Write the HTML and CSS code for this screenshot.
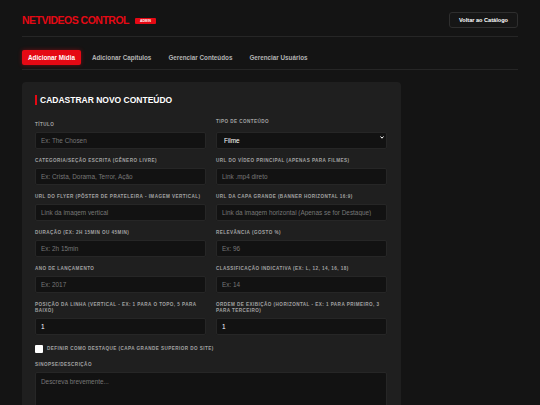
FILE: index.html
```html
<!DOCTYPE html>
<html lang="pt-BR">
<head>
<meta charset="utf-8">
<title>NetVideos Control</title>
<link rel="stylesheet" href="styles.css">
</head>
<body>
<div class="page">
  <header class="topbar">
    <div class="brand">
      <span class="brand-name">NETVIDEOS CONTROL</span>
      <span class="badge">ADMIN</span>
    </div>
    <button class="btn-back">Voltar ao Catálogo</button>
  </header>

  <nav class="tabs">
    <button class="tab active">Adicionar Mídia</button>
    <button class="tab">Adicionar Capítulos</button>
    <button class="tab">Gerenciar Conteúdos</button>
    <button class="tab">Gerenciar Usuários</button>
  </nav>

  <section class="card">
    <h2 class="card-title">CADASTRAR NOVO CONTEÚDO</h2>
    <form class="form-grid">
      <div class="field">
        <label>Título</label>
        <input type="text" placeholder="Ex: The Chosen">
      </div>
      <div class="field">
        <label>Tipo de Conteúdo</label>
        <div class="select-wrap">
          <select><option>Filme</option><option>Série</option></select>
          <svg class="chev" width="4" height="3" viewBox="0 0 4 3"><path d="M0.5 0.5 L2 2.2 L3.5 0.5" fill="none" stroke="#fff" stroke-width="1"/></svg>
        </div>
      </div>
      <div class="field">
        <label>Categoria/Seção Escrita (Gênero Livre)</label>
        <input type="text" placeholder="Ex: Crista, Dorama, Terror, Ação">
      </div>
      <div class="field">
        <label>URL do Vídeo Principal (Apenas para Filmes)</label>
        <input type="text" placeholder="Link .mp4 direto">
      </div>
      <div class="field">
        <label>URL do Flyer (Pôster de Prateleira - Imagem Vertical)</label>
        <input type="text" placeholder="Link da imagem vertical">
      </div>
      <div class="field">
        <label>URL da Capa Grande (Banner Horizontal 16:9)</label>
        <input type="text" placeholder="Link da imagem horizontal (Apenas se for Destaque)">
      </div>
      <div class="field">
        <label>Duração (Ex: 2h 15min ou 45min)</label>
        <input type="text" placeholder="Ex: 2h 15min">
      </div>
      <div class="field">
        <label>Relevância (Gosto %)</label>
        <input type="text" placeholder="Ex: 96">
      </div>
      <div class="field">
        <label>Ano de Lançamento</label>
        <input type="text" placeholder="Ex: 2017">
      </div>
      <div class="field">
        <label>Classificação Indicativa (Ex: L, 12, 14, 16, 18)</label>
        <input type="text" placeholder="Ex: 14">
      </div>
      <div class="field">
        <label>Posição da Linha (Vertical - Ex: 1 para o topo, 5 para baixo)</label>
        <input type="text" value="1">
      </div>
      <div class="field">
        <label>Ordem de Exibição (Horizontal - Ex: 1 para primeiro, 3 para terceiro)</label>
        <input type="text" value="1">
      </div>
      <div class="check-row">
        <input type="checkbox" id="destaque">
        <label for="destaque">Definir como Destaque (Capa grande superior do site)</label>
      </div>
      <div class="field span">
        <label>Sinopse/Descrição</label>
        <textarea placeholder="Descreva brevemente..."></textarea>
      </div>
    </form>
  </section>
</div>
</body>
</html>
```

FILE: styles.css
```css
* { box-sizing: border-box; }

html, body {
  margin: 0;
  background: #141414;
  font-family: "Liberation Sans", Arial, sans-serif;
  color: #fff;
}

.page {
  padding: 0 22px;
}

.topbar {
  display: flex;
  justify-content: space-between;
  align-items: center;
  padding: 12px 0 8px;
  border-bottom: 1px solid #262626;
}

.brand {
  display: flex;
  align-items: center;
  gap: 6px;
}

.brand-name {
  color: #e50914;
  font-weight: 700;
  font-size: 10.5px;
  letter-spacing: -0.5px;
  line-height: 12px;
}

.badge {
  background: #e50914;
  color: #fff;
  font-size: 3.4px;
  font-weight: 700;
  line-height: 6px;
  height: 6px;
  width: 21px;
  text-align: center;
  border-radius: 1px;
  margin-top: 1px;
}

.btn-back {
  height: 16px;
  padding: 0 9px;
  background: #161616;
  border: 1px solid #2e2e2e;
  border-radius: 3px;
  color: #fff;
  font-family: inherit;
  font-weight: 700;
  font-size: 5.6px;
  line-height: 14px;
}

.tabs {
  display: flex;
  gap: 5px;
  margin-top: 13px;
  padding-bottom: 4px;
  border-bottom: 1px solid #262626;
}

.tab {
  height: 15px;
  padding: 0 6px;
  border: 0;
  border-radius: 2px;
  background: transparent;
  color: #b3b3b3;
  font-family: inherit;
  font-weight: 700;
  font-size: 6.3px;
  line-height: 15px;
}

.tab.active {
  background: #e50914;
  color: #fff;
  box-shadow: 0 0 4px rgba(229, 9, 20, 0.45);
}

.card {
  width: 379px;
  margin-top: 12px;
  padding: 13px 14px 20px 13px;
  background: #1f1f1f;
  border-radius: 4px;
}

.card-title {
  margin: 0 0 14px;
  padding-left: 3px;
  border-left: 2px solid #e50914;
  font-size: 8.5px;
  line-height: 10px;
  font-weight: 700;
  color: #fff;
}

.form-grid {
  display: grid;
  grid-template-columns: 171px 171px;
  column-gap: 10px;
  row-gap: 9px;
  margin: 0;
}

.field {
  display: flex;
  flex-direction: column;
  justify-content: flex-end;
}

.field.span,
.check-row {
  grid-column: 1 / -1;
}

.field label,
.check-row label {
  display: block;
  margin-bottom: 4px;
  color: #a3a3a3;
  font-size: 4.6px;
  line-height: 6px;
  font-weight: 700;
  letter-spacing: 0.45px;
  text-transform: uppercase;
}

.field input,
.field select,
.field textarea {
  width: 100%;
  height: 17px;
  margin: 0;
  padding: 0 5px;
  background: #121212;
  border: 1px solid #262626;
  border-radius: 2px;
  color: #fff;
  font-family: inherit;
  font-size: 6.4px;
  outline: none;
}

.field input::placeholder,
.field textarea::placeholder {
  color: #777;
}

.select-wrap {
  position: relative;
}

.field select {
  appearance: none;
  -webkit-appearance: none;
  padding-left: 7px;
  font-size: 6.4px;
}

.chev {
  position: absolute;
  right: 3px;
  top: 7px;
  pointer-events: none;
}

.check-row {
  display: flex;
  align-items: center;
  gap: 4px;
  height: 9px;
}

.check-row input {
  appearance: none;
  -webkit-appearance: none;
  width: 8px;
  height: 8px;
  margin: 0;
  background: #fff;
  border-radius: 1px;
}

.check-row label {
  margin: 0;
}

.field textarea {
  height: 60px;
  padding: 5px;
  resize: none;
}
```
